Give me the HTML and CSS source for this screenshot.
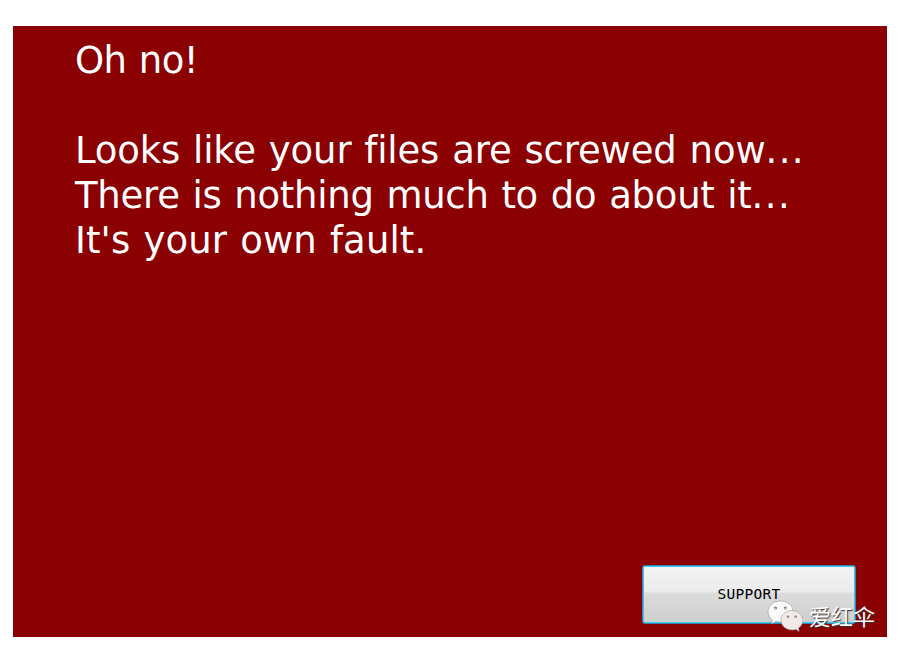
FILE: index.html
```html
<!DOCTYPE html>
<html lang="en">
<head>
<meta charset="utf-8">
<title>Oh no!</title>
<link rel="stylesheet" href="styles.css">
</head>
<body>
<main class="window">
  <div class="message">
    <p class="l1">Oh no!</p>
    <p>&nbsp;</p>
    <p class="l2">Looks like your files are screwed now<span class="dots">...</span></p>
    <p class="l3">There is nothing much to do about it<span class="dots">...</span></p>
    <p class="l4">It's your own fault.</p>
  </div>
  <button class="support" type="button">SUPPORT</button>
  <div class="watermark">
    <svg class="logo" viewBox="0 0 36 32" width="36" height="32">
      <path class="bubble" d="M13.500 1C6.500 1 1 5.600 1 11.500c0 3.600 1.700 6.500 4.300 8.500L4.800 24l4.200-2.700c1.500.5 3 .7 4.500.7C20.500 22 26 17.500 26 11.500S20.500 1 13.500 1z"/>
      <path class="bubble small" d="M25 10.500c-6.200 0-11 4.300-11 9.800S18.800 30 25 30c1.400 0 2.700-.2 3.900-.6l3.300 2-.6-3.400c2.700-1.800 4.300-4.600 4.300-7.700 0-5.500-4.700-9.800-10.900-9.800z"/>
      <g class="eye"><circle cx="8.500" cy="8" r="1.500"/><circle cx="18.300" cy="8" r="1.500"/><circle cx="21" cy="16.700" r="1.300"/><circle cx="28.700" cy="16.700" r="1.300"/></g>
      <g class="glint"><circle cx="8.500" cy="8.500" r=".7"/><circle cx="18.300" cy="8.500" r=".7"/><circle cx="21" cy="17.200" r=".6"/><circle cx="28.700" cy="17.200" r=".6"/></g>
    </svg>
    <span class="name">爱红伞</span>
  </div>
</main>
</body>
</html>
```
FILE: styles.css
```css
body { margin: 0; background: #fff; }
.window {
  position: relative;
  box-sizing: border-box;
  width: 874px;
  height: 611px;
  margin: 26px 0 0 13px;
  padding: 12px 31px 13px 62px;
  background: #8b0000;
  display: flex;
  flex-direction: column;
  justify-content: space-between;
}
.message {
  color: #fff;
  font: 37px/45px "DejaVu Sans", Verdana, sans-serif;
  font-variant-ligatures: none;
  word-spacing: 1.3px;
  white-space: nowrap;
}
.message p { margin: 0; height: 45px; }
.l1 { letter-spacing: -.6px; }
.l2 { letter-spacing: -.15px; }
.l3 { letter-spacing: -.27px; }
.l4 { letter-spacing: .1px; }
.dots { letter-spacing: 1.4px; }
.support {
  align-self: flex-end;
  box-sizing: border-box;
  width: 214px;
  height: 59px;
  padding: 0 0 2px;
  border: 1px solid #3584b0;
  border-radius: 3px;
  background: linear-gradient(#f3f3f3 0, #ebebeb 46%, #dcdcdc 47%, #cecece 100%);
  box-shadow: inset 0 0 0 1px #3ccbf5;
  color: #000;
  font: 14.5px "DejaVu Sans Mono", monospace;
  letter-spacing: .3px;
}
.watermark {
  position: absolute;
  left: 754px;
  top: 574px;
  display: flex;
  color: #fff;
  font: 22px/32px "Noto Sans CJK SC", sans-serif;
  text-shadow: 1px 1px 1px #333;
}
.logo { flex: none; margin-right: 6px; }
.name { margin-top: -1px; }
.bubble { fill: #fafafa; stroke: #888; stroke-width: .5; }
.small { fill: #f3e9e9; }
.eye { fill: #777; }
.glint { fill: #ddd; }
```
